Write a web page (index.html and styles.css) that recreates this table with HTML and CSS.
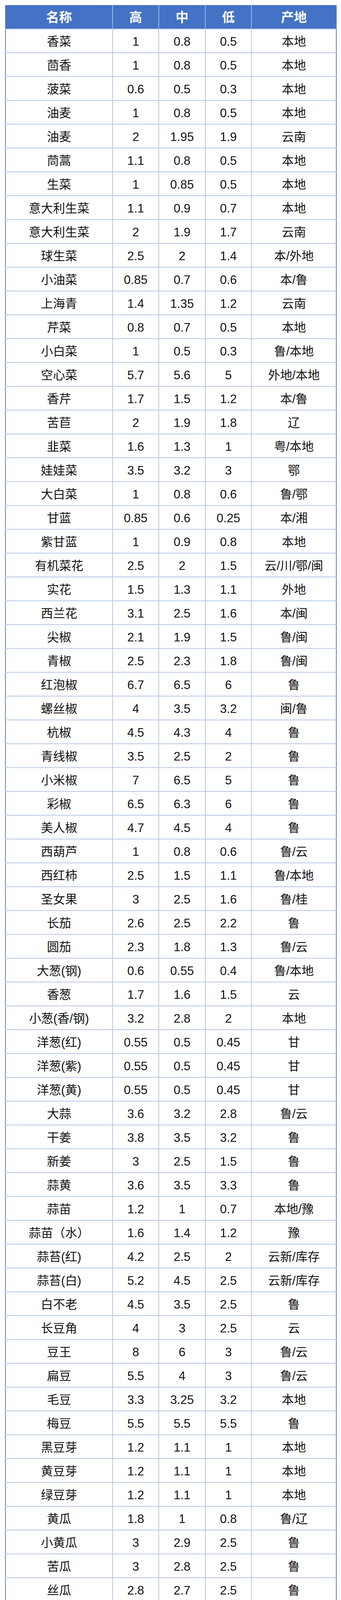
FILE: index.html
```html
<!DOCTYPE html>
<html lang="zh-CN">
<head>
<meta charset="utf-8">
<title>蔬菜价格表</title>
<link rel="stylesheet" href="styles.css">
</head>
<body>
<table class="price-table">
<colgroup>
<col class="c-name"><col class="c-num"><col class="c-num2"><col class="c-num"><col class="c-origin">
</colgroup>
<thead>
<tr><th>名称</th><th>高</th><th>中</th><th>低</th><th>产地</th></tr>
</thead>
<tbody>
<tr><td>香菜</td><td>1</td><td>0.8</td><td>0.5</td><td>本地</td></tr>
<tr><td>茴香</td><td>1</td><td>0.8</td><td>0.5</td><td>本地</td></tr>
<tr><td>菠菜</td><td>0.6</td><td>0.5</td><td>0.3</td><td>本地</td></tr>
<tr><td>油麦</td><td>1</td><td>0.8</td><td>0.5</td><td>本地</td></tr>
<tr><td>油麦</td><td>2</td><td>1.95</td><td>1.9</td><td>云南</td></tr>
<tr><td>茼蒿</td><td>1.1</td><td>0.8</td><td>0.5</td><td>本地</td></tr>
<tr><td>生菜</td><td>1</td><td>0.85</td><td>0.5</td><td>本地</td></tr>
<tr><td>意大利生菜</td><td>1.1</td><td>0.9</td><td>0.7</td><td>本地</td></tr>
<tr><td>意大利生菜</td><td>2</td><td>1.9</td><td>1.7</td><td>云南</td></tr>
<tr><td>球生菜</td><td>2.5</td><td>2</td><td>1.4</td><td>本/外地</td></tr>
<tr><td>小油菜</td><td>0.85</td><td>0.7</td><td>0.6</td><td>本/鲁</td></tr>
<tr><td>上海青</td><td>1.4</td><td>1.35</td><td>1.2</td><td>云南</td></tr>
<tr><td>芹菜</td><td>0.8</td><td>0.7</td><td>0.5</td><td>本地</td></tr>
<tr><td>小白菜</td><td>1</td><td>0.5</td><td>0.3</td><td>鲁/本地</td></tr>
<tr><td>空心菜</td><td>5.7</td><td>5.6</td><td>5</td><td>外地/本地</td></tr>
<tr><td>香芹</td><td>1.7</td><td>1.5</td><td>1.2</td><td>本/鲁</td></tr>
<tr><td>苦苣</td><td>2</td><td>1.9</td><td>1.8</td><td>辽</td></tr>
<tr><td>韭菜</td><td>1.6</td><td>1.3</td><td>1</td><td>粤/本地</td></tr>
<tr><td>娃娃菜</td><td>3.5</td><td>3.2</td><td>3</td><td>鄂</td></tr>
<tr><td>大白菜</td><td>1</td><td>0.8</td><td>0.6</td><td>鲁/鄂</td></tr>
<tr><td>甘蓝</td><td>0.85</td><td>0.6</td><td>0.25</td><td>本/湘</td></tr>
<tr><td>紫甘蓝</td><td>1</td><td>0.9</td><td>0.8</td><td>本地</td></tr>
<tr><td>有机菜花</td><td>2.5</td><td>2</td><td>1.5</td><td>云/川/鄂/闽</td></tr>
<tr><td>实花</td><td>1.5</td><td>1.3</td><td>1.1</td><td>外地</td></tr>
<tr><td>西兰花</td><td>3.1</td><td>2.5</td><td>1.6</td><td>本/闽</td></tr>
<tr><td>尖椒</td><td>2.1</td><td>1.9</td><td>1.5</td><td>鲁/闽</td></tr>
<tr><td>青椒</td><td>2.5</td><td>2.3</td><td>1.8</td><td>鲁/闽</td></tr>
<tr><td>红泡椒</td><td>6.7</td><td>6.5</td><td>6</td><td>鲁</td></tr>
<tr><td>螺丝椒</td><td>4</td><td>3.5</td><td>3.2</td><td>闽/鲁</td></tr>
<tr><td>杭椒</td><td>4.5</td><td>4.3</td><td>4</td><td>鲁</td></tr>
<tr><td>青线椒</td><td>3.5</td><td>2.5</td><td>2</td><td>鲁</td></tr>
<tr><td>小米椒</td><td>7</td><td>6.5</td><td>5</td><td>鲁</td></tr>
<tr><td>彩椒</td><td>6.5</td><td>6.3</td><td>6</td><td>鲁</td></tr>
<tr><td>美人椒</td><td>4.7</td><td>4.5</td><td>4</td><td>鲁</td></tr>
<tr><td>西葫芦</td><td>1</td><td>0.8</td><td>0.6</td><td>鲁/云</td></tr>
<tr><td>西红柿</td><td>2.5</td><td>1.5</td><td>1.1</td><td>鲁/本地</td></tr>
<tr><td>圣女果</td><td>3</td><td>2.5</td><td>1.6</td><td>鲁/桂</td></tr>
<tr><td>长茄</td><td>2.6</td><td>2.5</td><td>2.2</td><td>鲁</td></tr>
<tr><td>圆茄</td><td>2.3</td><td>1.8</td><td>1.3</td><td>鲁/云</td></tr>
<tr><td>大葱(钢)</td><td>0.6</td><td>0.55</td><td>0.4</td><td>鲁/本地</td></tr>
<tr><td>香葱</td><td>1.7</td><td>1.6</td><td>1.5</td><td>云</td></tr>
<tr><td>小葱(香/钢)</td><td>3.2</td><td>2.8</td><td>2</td><td>本地</td></tr>
<tr><td>洋葱(红)</td><td>0.55</td><td>0.5</td><td>0.45</td><td>甘</td></tr>
<tr><td>洋葱(紫)</td><td>0.55</td><td>0.5</td><td>0.45</td><td>甘</td></tr>
<tr><td>洋葱(黄)</td><td>0.55</td><td>0.5</td><td>0.45</td><td>甘</td></tr>
<tr><td>大蒜</td><td>3.6</td><td>3.2</td><td>2.8</td><td>鲁/云</td></tr>
<tr><td>干姜</td><td>3.8</td><td>3.5</td><td>3.2</td><td>鲁</td></tr>
<tr><td>新姜</td><td>3</td><td>2.5</td><td>1.5</td><td>鲁</td></tr>
<tr><td>蒜黄</td><td>3.6</td><td>3.5</td><td>3.3</td><td>鲁</td></tr>
<tr><td>蒜苗</td><td>1.2</td><td>1</td><td>0.7</td><td>本地/豫</td></tr>
<tr><td>蒜苗（水）</td><td>1.6</td><td>1.4</td><td>1.2</td><td>豫</td></tr>
<tr><td>蒜苔(红)</td><td>4.2</td><td>2.5</td><td>2</td><td>云新/库存</td></tr>
<tr><td>蒜苔(白)</td><td>5.2</td><td>4.5</td><td>2.5</td><td>云新/库存</td></tr>
<tr><td>白不老</td><td>4.5</td><td>3.5</td><td>2.5</td><td>鲁</td></tr>
<tr><td>长豆角</td><td>4</td><td>3</td><td>2.5</td><td>云</td></tr>
<tr><td>豆王</td><td>8</td><td>6</td><td>3</td><td>鲁/云</td></tr>
<tr><td>扁豆</td><td>5.5</td><td>4</td><td>3</td><td>鲁/云</td></tr>
<tr><td>毛豆</td><td>3.3</td><td>3.25</td><td>3.2</td><td>本地</td></tr>
<tr><td>梅豆</td><td>5.5</td><td>5.5</td><td>5.5</td><td>鲁</td></tr>
<tr><td>黑豆芽</td><td>1.2</td><td>1.1</td><td>1</td><td>本地</td></tr>
<tr><td>黄豆芽</td><td>1.2</td><td>1.1</td><td>1</td><td>本地</td></tr>
<tr><td>绿豆芽</td><td>1.2</td><td>1.1</td><td>1</td><td>本地</td></tr>
<tr><td>黄瓜</td><td>1.8</td><td>1</td><td>0.8</td><td>鲁/辽</td></tr>
<tr><td>小黄瓜</td><td>3</td><td>2.9</td><td>2.5</td><td>鲁</td></tr>
<tr><td>苦瓜</td><td>3</td><td>2.8</td><td>2.5</td><td>鲁</td></tr>
<tr><td>丝瓜</td><td>2.8</td><td>2.7</td><td>2.5</td><td>鲁</td></tr>
<tr><td>瓠瓜</td><td>2.5</td><td>2.5</td><td>2.5</td><td>鲁</td></tr>
<tr><td>南瓜(板栗)</td><td>1.1</td><td>1</td><td>0.9</td><td>桂</td></tr>
<tr><td>南瓜(贝贝)</td><td>2.2</td><td>1.5</td><td>1.3</td><td>桂</td></tr>
<tr><td>南瓜(黄)</td><td>1.9</td><td>1.8</td><td>1.7</td><td>湘</td></tr>
<tr><td>南瓜(黄金)</td><td>2</td><td>1.9</td><td>1.8</td><td>桂</td></tr>
<tr><td>冬瓜(吊)</td><td>0.8</td><td>0.7</td><td>0.6</td><td>桂</td></tr>
<tr><td>冬瓜(白)</td><td>1.1</td><td>1</td><td>0.8</td><td>本地</td></tr>
<tr><td>小冬瓜</td><td>2</td><td>2</td><td>2</td><td>鲁</td></tr>
<tr><td>平菇</td><td>1.8</td><td>1.3</td><td>1</td><td>本地</td></tr>
<tr><td>香菇</td><td>7</td><td>4</td><td>2.5</td><td>冀</td></tr>
<tr><td>金针菇</td><td>3.5</td><td>3.4</td><td>3.2</td><td>外地</td></tr>
<tr><td>白玉菇</td><td>3.2</td><td>2.5</td><td>2.2</td><td>外地</td></tr>
<tr><td>海鲜菇</td><td>3.5</td><td>3.25</td><td>3</td><td>外地</td></tr>
<tr><td>杏鲍菇</td><td>3.3</td><td>2.8</td><td>2.4</td><td>外地</td></tr>
<tr><td>蟹味菇</td><td>3.3</td><td>3</td><td>2.85</td><td>外地</td></tr>
<tr><td>山药(麻山药)</td><td>3.5</td><td>3</td><td>2</td><td>冀</td></tr>
<tr><td>山药(小白嘴)</td><td>5</td><td>4.5</td><td>4</td><td>冀</td></tr>
<tr><td>山药(白玉)</td><td>3.5</td><td>3.5</td><td>3.5</td><td>榆林</td></tr>
<tr><td>红薯(西瓜红)</td><td>2.3</td><td>1.8</td><td>1.5</td><td>冀</td></tr>
<tr><td>红薯(大开花)</td><td>1.6</td><td>1.5</td><td>1.3</td><td>冀</td></tr>
<tr><td>红薯(板栗)</td><td>1.6</td><td>1.4</td><td>1.2</td><td>冀</td></tr>
<tr><td>红薯(白哈密)</td><td>2.5</td><td>2</td><td>1.5</td><td>冀</td></tr>
<tr><td>红薯(榴莲蜜薯)</td><td>5</td><td>4.5</td><td>3.5</td><td>津</td></tr>
<tr><td>红薯(紫薯)</td><td>3</td><td>2.8</td><td>2.5</td><td>外地</td></tr>
<tr><td>红薯(龙九)</td><td>1.2</td><td>1.1</td><td>1</td><td>冀</td></tr>
<tr><td>白萝卜</td><td>0.4</td><td>0.3</td><td>0.25</td><td>鄂</td></tr>
<tr><td>胡萝卜</td><td>1.5</td><td>1.1</td><td>0.7</td><td>闽</td></tr>
<tr><td>青萝卜</td><td>1.9</td><td>1.8</td><td>1.7</td><td>外地</td></tr>
<tr><td>樱桃萝卜</td><td>1.8</td><td>1.7</td><td>1.5</td><td>本地</td></tr>
<tr><td>水萝卜</td><td>1.3</td><td>1.2</td><td>1</td><td>本地</td></tr>
<tr><td>土豆</td><td>1.6</td><td>1</td><td>0.6</td><td>云/内蒙</td></tr>
<tr><td>苤蓝</td><td>1.3</td><td>1.1</td><td>0.7</td><td>本地</td></tr>
<tr><td>莴笋</td><td>1.7</td><td>1.5</td><td>1.4</td><td>鲁</td></tr>
<tr><td>湿海带</td><td>1</td><td>0.9</td><td>0.8</td><td>鲁</td></tr>
<tr><td>玉米(水果)</td><td>1.1</td><td>1</td><td>0.9</td><td>粤</td></tr>
<tr><td>玉米(糯)</td><td>1.9</td><td>1.8</td><td>1.7</td><td>粤</td></tr>
<tr><td>莲藕</td><td>1.6</td><td>1.5</td><td>1.3</td><td>苏/鲁</td></tr>
</tbody>
</table>
</body>
</html>
```

FILE: styles.css
```css
html, body {
  margin: 0;
  padding: 0;
  background: #ffffff;
}

body {
  padding: 13px 0 0 13px;
  font-family: "Liberation Sans", Arial, "Noto Sans CJK SC", sans-serif;
  color: #111111;
}

.price-table {
  border-collapse: collapse;
  table-layout: fixed;
  width: 846px;
  border: 2px solid #5a7ec6;
  border-top: 0;
}

.c-name { width: 274px; }
.c-num { width: 118px; }
.c-num2 { width: 119px; }
.c-origin { width: 217px; }

.price-table th,
.price-table td {
  padding: 0;
  line-height: 36px;
  text-align: center;
  vertical-align: middle;
  white-space: nowrap;
  border: 2px solid #b8c8e8;
  overflow: hidden;
}

.price-table th {
  height: 56px;
  padding-top: 4px;
  background: #4472c4;
  color: #ffffff;
  font-size: 33px;
  font-weight: bold;
  border-top: 0;
  border-color: #9fb6e2;
}

.price-table td {
  height: 55px;
  padding-top: 4px;
  font-size: 31px;
  font-weight: normal;
}

.price-table th:first-child,
.price-table td:first-child {
  border-left: 2px solid #5a7ec6;
}

.price-table th:last-child,
.price-table td:last-child {
  border-right: 2px solid #5a7ec6;
}

.price-table tbody tr:last-child td {
  border-bottom: 2px solid #5a7ec6;
}
```
